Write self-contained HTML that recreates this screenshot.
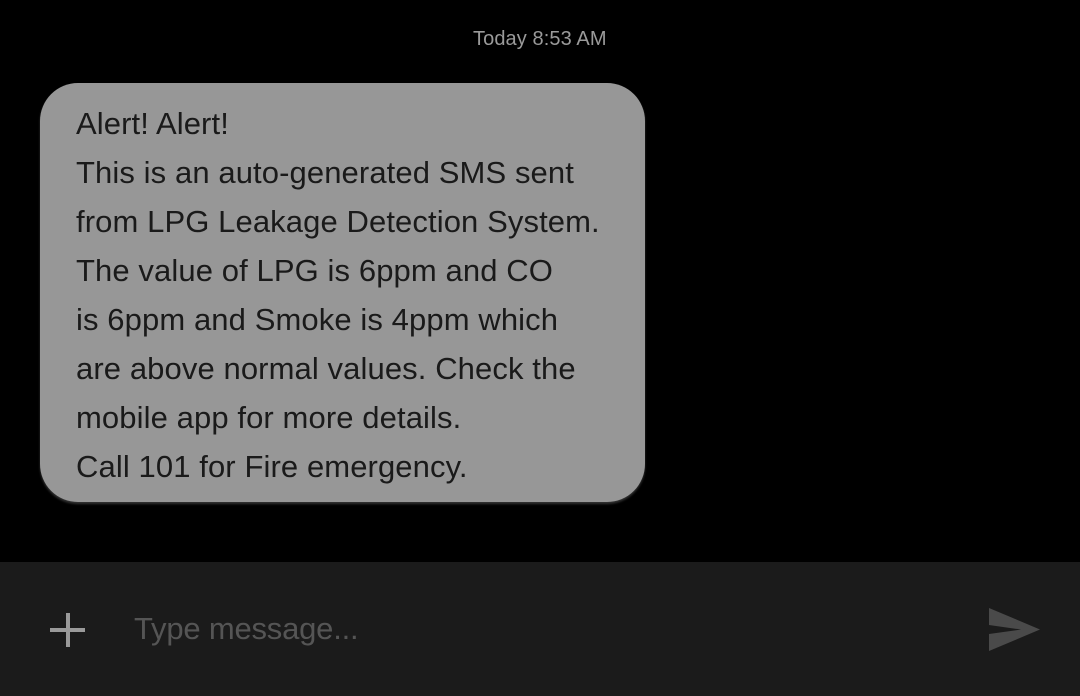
<!DOCTYPE html>
<html><head><style>
html,body{margin:0;padding:0;background:#000;width:1080px;height:696px;overflow:hidden;font-family:"Liberation Sans",sans-serif}
.ts{position:absolute;left:473px;top:28px;font-size:20px;color:#9a9a9a;letter-spacing:0.1px}
.b{position:absolute;left:40px;top:83px;width:605px;height:419px;background:#979797;border-radius:38px;box-shadow:0 2px 2px #333}
.t{position:absolute;left:76px;top:99px;font-size:31px;line-height:49px;color:#1a1a1a;white-space:nowrap;letter-spacing:0.1px}
.bar{position:absolute;left:0;top:562px;width:1080px;height:134px;background:#1b1b1b}
.ph{position:absolute;left:134px;top:611px;font-size:31px;color:#555;letter-spacing:-0.2px}
</style></head><body>
<div class="ts">Today 8:53 AM</div>
<div class="b"></div>
<div class="t">Alert! Alert!<br>This is an auto-generated SMS sent<br>from LPG Leakage Detection System.<br>The value of LPG is 6ppm and CO<br>is 6ppm and Smoke is 4ppm which<br>are above normal values. Check the<br>mobile app for more details.<br>Call 101 for Fire emergency.</div>
<div class="bar"></div>
<svg style="position:absolute;left:50px;top:613px" width="36" height="36"><rect x="16" y="0" width="4" height="34" fill="#9a9a9a"/><rect x="0" y="15" width="35" height="4" fill="#9a9a9a"/></svg>
<div class="ph">Type message...</div>
<svg style="position:absolute;left:988px;top:608px" width="54" height="44"><path d="M1 0 L52 21.5 L1 43 L1 26 L33 21.5 L1 17 Z" fill="#4a4a4a"/></svg>
</body></html>
